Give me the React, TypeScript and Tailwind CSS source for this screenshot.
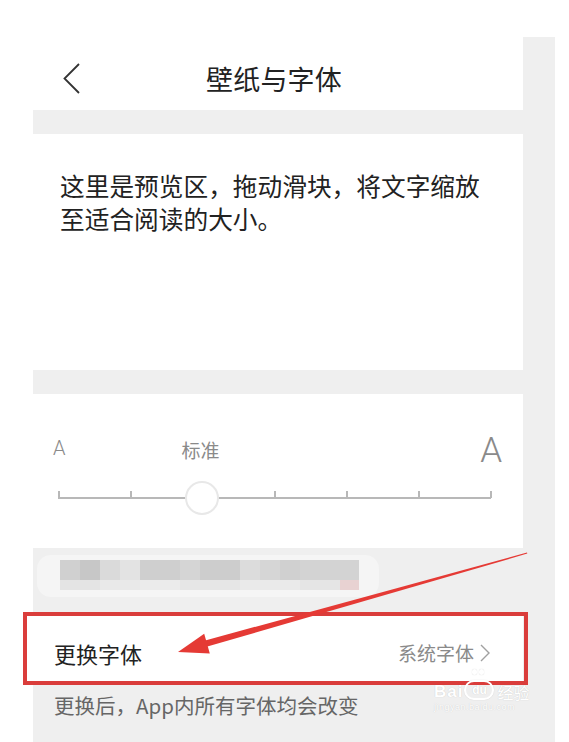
import React from "react";

const ticks = [0, 72, 144, 216, 288, 360, 432];

const mosaicTop = [
  { w: 20, c: "#d0d0d0" },
  { w: 20, c: "#c7c7c7" },
  { w: 20, c: "#dadada" },
  { w: 20, c: "#e3e3e3" },
  { w: 40, c: "#cfcfcf" },
  { w: 20, c: "#d5d5d5" },
  { w: 40, c: "#cdcdcd" },
  { w: 20, c: "#dcdcdc" },
  { w: 20, c: "#d6d6d6" },
  { w: 20, c: "#d0d0d0" },
  { w: 59, c: "#d3d3d3" },
];

const mosaicBottom = [
  { w: 40, c: "#e4e4e4" },
  { w: 40, c: "#e9e9e9" },
  { w: 40, c: "#ebebeb" },
  { w: 60, c: "#e6e6e6" },
  { w: 60, c: "#eaeaea" },
  { w: 40, c: "#e5e5e5" },
  { w: 19, c: "#e8d2d2" },
];

export default function App() {
  return (
    <div className="relative w-[569px] h-[742px] overflow-hidden bg-white font-['Noto_Sans_CJK_SC',sans-serif]">
      <div className="ml-[33px] mt-[37px] w-[522px] h-[705px] bg-[#efefef] pr-[32px]">
        <div className="w-[490px] flex flex-col">
          {/* nav */}
          <div className="h-[73px] bg-white flex items-center pl-[30px] pt-[9px]">
            <svg width="17" height="31" viewBox="0 0 17 31" fill="none">
              <path d="M16 1 L1.5 15.5 L16 30" stroke="#333" strokeWidth="1.8" strokeLinejoin="miter" />
            </svg>
            <div className="ml-[126px] text-[27px] leading-none text-[#222] tracking-[0.2px]">壁纸与字体</div>
          </div>

          {/* preview */}
          <div className="mt-[24px] h-[236px] bg-white pl-[27px] pt-[35px]">
            <p className="text-[24.7px] leading-[33px] text-[#222]">
              这里是预览区，拖动滑块，将文字缩放
              <br />
              至适合阅读的大小。
            </p>
          </div>

          {/* slider card */}
          <div className="mt-[24px] h-[154px] bg-white">
            <div className="flex items-start pl-[20px] pr-[21px]">
              <span className="mt-[44px] text-[20px] leading-none text-[#8a8a8a] font-['Roboto',sans-serif] font-light">A</span>
              <span className="mt-[46px] ml-[116px] text-[19px] leading-none text-[#8a8a8a]">标准</span>
              <span className="mt-[39px] ml-auto text-[35px] leading-none text-[#8a8a8a] font-['Roboto',sans-serif] font-light">A</span>
            </div>
            <div className="relative ml-[25px] mt-[13px] w-[433px] h-[34px]">
              <div className="absolute left-0 right-0 top-[16px] h-[1.5px] bg-[#b8b8b8]" />
              {ticks.map((t) => (
                <div
                  key={t}
                  className="absolute top-[10px] w-[1.5px] h-[7px] bg-[#b8b8b8]"
                  style={{ left: t }}
                />
              ))}
              <div className="absolute left-[127px] top-0 w-[34px] h-[34px] rounded-full bg-white border-2 border-[#e8e8e8]" />
            </div>
          </div>

          {/* blurred area */}
          <div className="h-[65px] pt-[7px] pl-[4px]">
            <div className="w-[342px] h-[42px] rounded-[14px] bg-[#f5f5f5] pt-[5px] pl-[23px] blur-[0.6px]">
              <div className="flex">
                {mosaicTop.map((b, i) => (
                  <div key={i} className="h-[20px]" style={{ width: b.w, background: b.c }} />
                ))}
              </div>
              <div className="flex">
                {mosaicBottom.map((b, i) => (
                  <div key={i} className="h-[10px]" style={{ width: b.w, background: b.c }} />
                ))}
              </div>
            </div>
          </div>

          {/* row */}
          <div className="h-[71px] bg-white flex items-center justify-between pl-[21px] pr-[33px] pt-[8px]">
            <span className="text-[22px] leading-none text-[#222]">更换字体</span>
            <span className="flex items-center text-[19px] leading-none text-[#8a8a8a]">
              系统字体
              <svg className="ml-[6px]" width="10" height="18" viewBox="0 0 10 18" fill="none">
                <path d="M1 1 L9 9 L1 17" stroke="#a0a0a0" strokeWidth="1.4" />
              </svg>
            </span>
          </div>

          {/* hint */}
          <div className="pl-[21px] pt-[9px]">
            <span className="text-[20.5px] leading-[24px] text-[#666]">更换后，App内所有字体均会改变</span>
          </div>
        </div>
      </div>

      {/* red annotation box */}
      <div className="absolute left-[23px] top-[612px] w-[505px] h-[73px] border-[4px] border-[#da3d3b] pointer-events-none" />

      {/* red arrow */}
      <svg className="absolute inset-0 pointer-events-none" width="569" height="742" viewBox="0 0 569 742">
        <polygon points="527,552.5 527.3,553.6 206.5,646.8 205.2,640.5" fill="#e53a35" />
        <polygon points="178,652 204.2,633.8 209.8,653.6" fill="#e53a35" />
      </svg>

      {/* watermark */}
      <div className="absolute left-[434px] top-[680px] flex flex-col items-start pointer-events-none text-white [text-shadow:0_0_1px_rgba(0,0,0,0.2)]">
        <div className="flex items-end leading-none">
          <span className="text-[17px] font-bold font-['Liberation_Sans',sans-serif] tracking-[1px]">Bai</span>
          <span className="relative ml-[1px] flex h-[20px] w-[30px] items-center justify-center rounded-full border-2 border-white text-[12px] font-bold font-['Liberation_Sans',sans-serif] [box-shadow:0_0_1px_rgba(0,0,0,0.2)]">
            du
            <span className="absolute -top-[13px] left-[6px] flex gap-[2px]">
              <span className="w-[5px] h-[6px] rounded-full bg-white [box-shadow:0_0_1px_rgba(0,0,0,0.2)]" />
              <span className="w-[5px] h-[6px] rounded-full bg-white [box-shadow:0_0_1px_rgba(0,0,0,0.2)]" />
            </span>
          </span>
          <span className="ml-[3px] text-[16px]">经验</span>
        </div>
        <span className="mt-[3px] text-[9px] leading-none font-['Liberation_Sans',sans-serif] tracking-[0.5px]">jingyan.baidu.com</span>
      </div>
    </div>
  );
}
